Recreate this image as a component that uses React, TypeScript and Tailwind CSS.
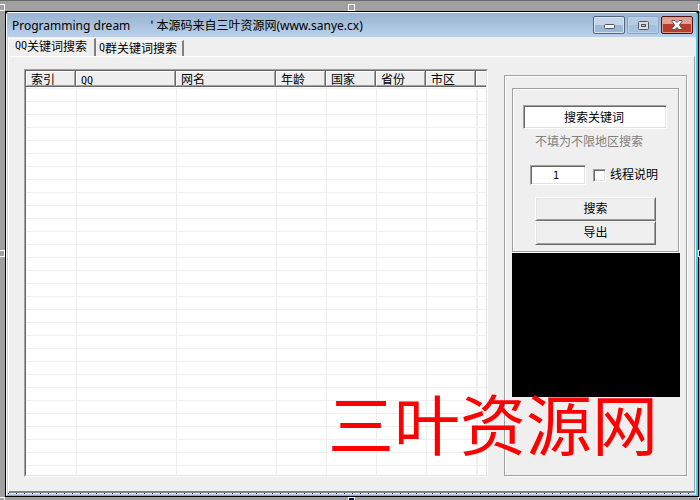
import { type ReactNode } from 'react';

const columns = [
  { title: '索引', width: 'w-[50px]' },
  { title: 'QQ', width: 'w-[100px]' },
  { title: '网名', width: 'w-[100px]' },
  { title: '年龄', width: 'w-[50px]' },
  { title: '国家', width: 'w-[50px]' },
  { title: '省份', width: 'w-[50px]' },
  { title: '市区', width: 'w-[50px]' },
  { title: '', width: '' },
];

const rows = Array.from({ length: 60 }, (_, i) => i);

function Latin({ children }: { children: ReactNode }) {
  return <span className="font-['DejaVu_Sans_Mono',monospace] text-[10px]">{children}</span>;
}

function Handle({ place, filled = false }: { place: string; filled?: boolean }) {
  return (
    <span
      className={`absolute size-[7px] border border-white ${filled ? 'bg-[#000080]' : 'bg-[#a0a0a0]'} ${place}`}
    />
  );
}

function TitleBar() {
  return (
    <header className="flex h-6 items-center bg-linear-to-b from-[#98b3d0] to-[#b9d1ec] pl-[5px] pr-[3px]">
      <h1 className="flex-1 whitespace-pre text-[12px] leading-6">
        <span className="font-['Noto_Sans',sans-serif] text-[12px]">Programming dream</span>
        <span className="ml-5">' </span>
        本源码来自三叶资源网
        <span className="font-['Noto_Sans',sans-serif] text-[12px]">(www.sanye.cx)</span>
      </h1>
      <div className="flex gap-0.5">
        <button
          aria-label="最小化"
          className="flex h-[18px] w-8 items-center justify-center rounded-[2px] border border-[#52647e] bg-linear-to-b from-[#c3d5e9] from-50% to-[#9db8d5] to-50% shadow-[inset_0_0_0_1px_#d5e3f3]"
        >
          <svg width="11" height="5" viewBox="0 0 11 5" className="mt-0.5">
            <rect x="0.5" y="0.5" width="10" height="4" rx="1" fill="#f5f5f5" stroke="#535666" />
          </svg>
        </button>
        <button
          aria-label="最大化"
          className="flex h-[18px] w-8 items-center justify-center rounded-[2px] border border-[#8ba4c2] bg-linear-to-b from-[#b4cbe3] from-50% to-[#a5c0dd] to-50% shadow-[inset_0_0_0_1px_#bdd1e8]"
        >
          <svg width="11" height="9" viewBox="0 0 11 9">
            <rect x="0.5" y="0.5" width="10" height="8" rx="1" fill="#dcdcd8" stroke="#535666" />
            <rect x="3.5" y="3.5" width="4" height="2" fill="#a5c0dd" stroke="#535666" />
          </svg>
        </button>
        <button
          aria-label="关闭"
          className="flex h-[18px] w-8 items-center justify-center rounded-[2px] border border-[#4f1116] bg-linear-to-b from-[#e2a197] from-45% to-[#b93d28] to-45% shadow-[inset_0_0_0_1px_#dd9c90]"
        >
          <svg width="12" height="10" viewBox="0 0 12 10">
            <path
              d="M1 .5h3l2 2 2-2h3v1L8.5 5 11 8.500v1H8l-2-2-2 2H1v-1L3.500 5 1 1.500z"
              fill="#f5f5f5"
              stroke="#535666"
            />
          </svg>
        </button>
      </div>
    </header>
  );
}

function Tabs() {
  return (
    <nav className="flex h-[19px] items-end">
      <button className="-mb-px mt-px flex h-[19px] w-[87px] items-start border-r-2 border-t border-r-[#808080] border-t-white bg-[#efefef] pl-1.5 leading-[14px]">
        <Latin>QQ</Latin>关键词搜索
      </button>
      <button className="flex h-4 w-[88px] items-start border-r-2 border-t border-r-[#808080] border-t-white pl-[3px] leading-[14px]">
        <Latin>Q</Latin>群关键词搜索
      </button>
    </nav>
  );
}

function ResultList() {
  return (
    <div className="min-w-0 flex-1 border border-b-white border-l-[#a0a0a0] border-r-white border-t-[#a0a0a0]">
      <div className="h-full overflow-hidden border border-b-[#e3e3e3] border-l-[#696969] border-r-[#e3e3e3] border-t-[#696969] bg-white">
        <table className="w-full table-fixed border-separate border-spacing-0">
          <thead>
            <tr>
              {columns.map((c, i) => (
                <th key={i} className={`p-0 pb-px text-left font-normal ${c.width}`}>
                  <div
                    className={`h-4 border-b border-b-[#696969] ${c.title ? 'border-r border-r-[#696969]' : ''}`}
                  >
                    <div
                      className={`h-[15px] border-b border-l border-t border-b-[#a0a0a0] border-l-white border-t-white bg-[#efefef] pl-1 leading-[13px] ${c.title ? 'border-r border-r-[#a0a0a0]' : ''}`}
                    >
                      {c.title === 'QQ' ? <Latin>QQ</Latin> : c.title}
                    </div>
                  </div>
                </th>
              ))}
            </tr>
          </thead>
          <tbody>
            {rows.map((r) => (
              <tr key={r}>
                {columns.map((c, i) => (
                  <td
                    key={i}
                    className={`h-[13px] border-t border-[#efefef] p-0 ${i === 0 ? '' : c.title ? 'border-l' : 'border-l-2'}`}
                  />
                ))}
              </tr>
            ))}
          </tbody>
        </table>
      </div>
    </div>
  );
}

const sunken =
  'border border-b-white border-l-[#a0a0a0] border-r-white border-t-[#a0a0a0] bg-white shadow-[inset_1px_1px_0_#696969,inset_-1px_-1px_0_#e3e3e3]';
const raised =
  'border border-b-[#696969] border-l-white border-r-[#696969] border-t-white bg-[#efefef] shadow-[inset_1px_1px_0_#e3e3e3,inset_-1px_-1px_0_#a0a0a0]';
const group = 'border border-[#a0a0a0] shadow-[1px_1px_0_#fff,inset_1px_1px_0_#fff]';

function SearchPanel() {
  return (
    <aside className={`mb-px mt-1.5 w-[183px] shrink-0 pl-[7px] pr-1.5 pt-3 ${group}`}>
      <form className={`mr-px px-[10px] pb-1.5 pt-4 ${group}`} onSubmit={(e) => e.preventDefault()}>
        <div className="pr-px">
          <input
            aria-label="搜索关键词"
            defaultValue="搜索关键词"
            className={`block h-6 w-full pb-0.5 pr-0.5 text-center outline-none ${sunken}`}
          />
        </div>
        <p className="ml-3 mt-1 h-4 leading-4 text-[#808080]">不填为不限地区搜索</p>
        <div className="ml-[7px] mt-4 flex h-5 items-center">
          <input
            aria-label="线程"
            defaultValue="1"
            className={`h-5 w-14 pr-1 text-center font-['DejaVu_Sans_Mono',monospace] text-[10px] outline-none ${sunken}`}
          />
          <input id="threads" type="checkbox" className={`ml-[7px] size-[13px] appearance-none ${sunken}`} />
          <label htmlFor="threads" className="ml-1 whitespace-nowrap pb-0.5">
            线程说明
          </label>
        </div>
        <div className="mx-3 mt-3 flex flex-col">
          <button className={`h-6 pb-0.5 ${raised}`}>搜索</button>
          <button className={`h-6 pb-0.5 ${raised}`}>导出</button>
        </div>
      </form>
      <div className="mt-px h-36 bg-black" />
    </aside>
  );
}

export default function App() {
  return (
    <div className="relative flex h-screen flex-col overflow-hidden border-t border-[#696969] bg-[#a0a0a0] pb-[3px] pl-[5px] pr-px pt-[10px] font-['Noto_Sans_CJK_SC',sans-serif] text-[12px] text-black">
      <div className="flex min-h-0 flex-1 flex-col border border-black bg-black">
        <div className="flex min-h-0 flex-1 flex-col rounded-t-[3px] border border-r-2 border-b-[#45c8ee] border-l-white border-r-[#45c8ee] border-t-white bg-[#efefef]">
          <TitleBar />
          <div className="flex min-h-0 flex-1 flex-col border-b border-l border-b-[#c3cce8] border-l-[#c3cce8]">
            <div className="flex min-h-0 flex-1 flex-col border-l border-white">
              <Tabs />
              <main className="mr-px flex min-h-0 flex-1 gap-4 border-b-2 border-r border-t border-b-[#808080] border-r-[#a0a0a0] border-t-white pb-[14px] pl-[15px] pr-[7px] pt-3">
                <ResultList />
                <SearchPanel />
              </main>
            </div>
            <div className="h-px bg-[repeating-linear-gradient(90deg,#000_0_1px,#efefef_1px_8px)]" />
          </div>
        </div>
      </div>
      <Handle place="-left-0.5 top-[3px]" />
      <Handle place="left-[348px] top-[3px]" />
      <Handle place="-right-[5px] top-[3px]" />
      <Handle place="-left-0.5 top-[249px]" />
      <Handle place="-right-[5px] top-[249px]" filled />
      <Handle place="-left-0.5 -bottom-1" />
      <Handle place="-bottom-1 left-[348px]" filled />
      <Handle place="-bottom-1 -right-[5px]" filled />
      <p className="pointer-events-none absolute bottom-[39px] right-[42px] whitespace-nowrap text-[66px] leading-[80px] text-[#ff0000]">
        三叶资源网
      </p>
    </div>
  );
}
